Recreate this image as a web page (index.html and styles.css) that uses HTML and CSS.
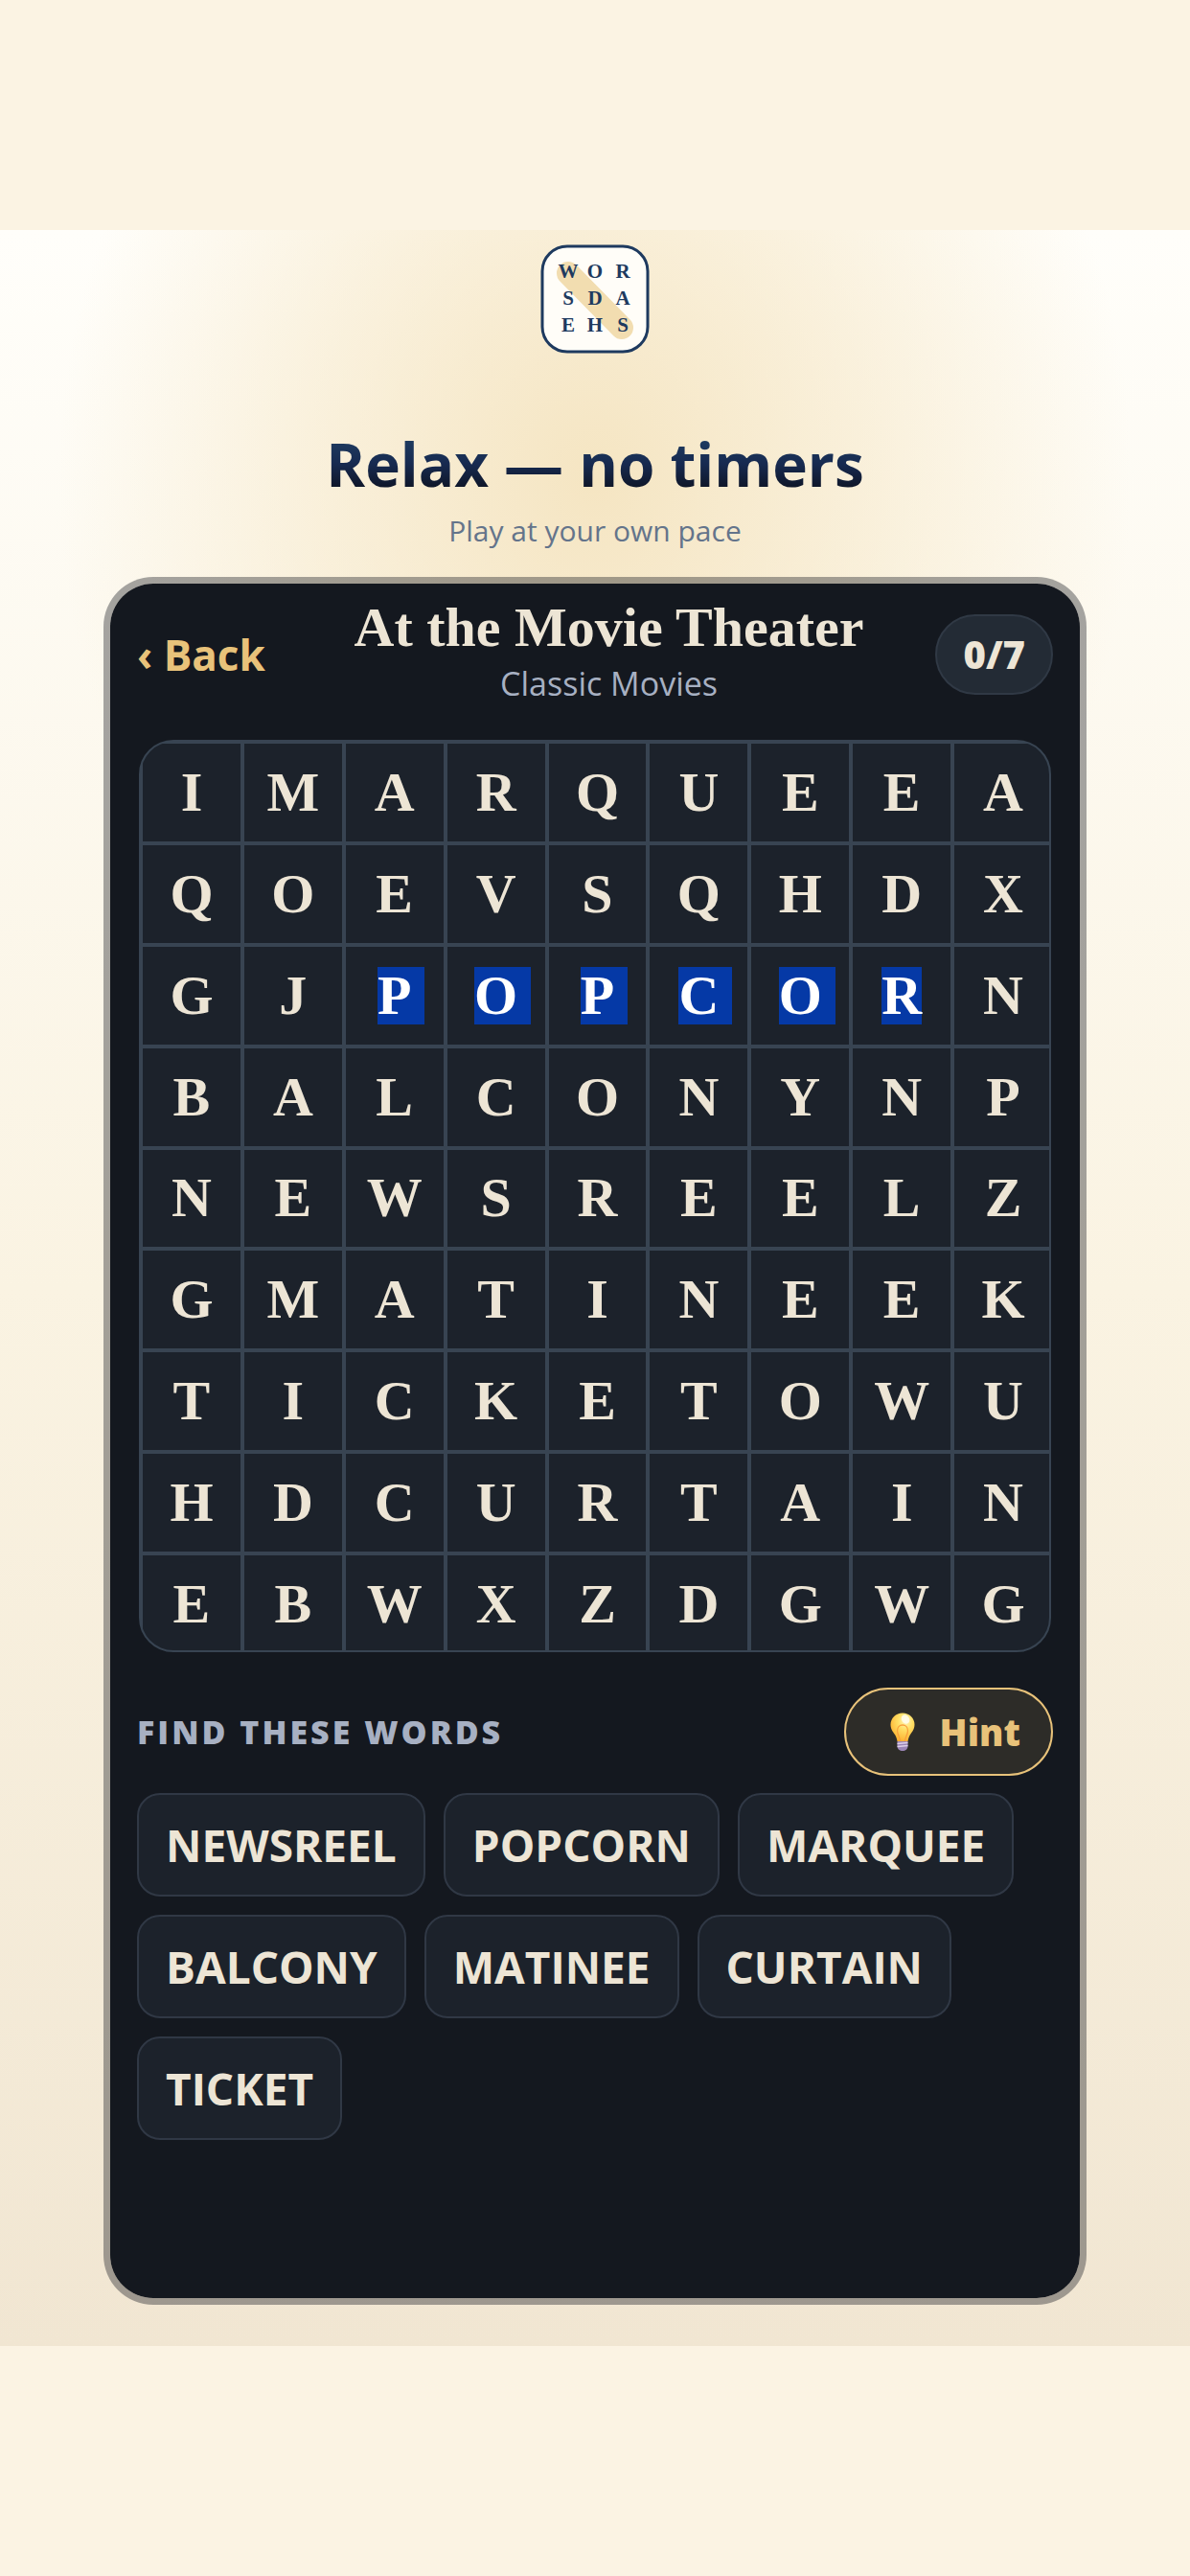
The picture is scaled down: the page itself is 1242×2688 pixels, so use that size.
FILE: index.html
```html
<!DOCTYPE html>
<html lang="en">
<head>
    <meta charset="UTF-8">
    <meta name="viewport" content="width=device-width, initial-scale=1.0">
    <title>Wordsearch | Relax</title>
    <link rel="stylesheet" href="styles.css">
</head>
<body>

    <main class="stage">
        <svg class="logo" viewBox="0 0 114 114" role="img" aria-label="Wordsearch logo">
            <rect x="2" y="2" width="110" height="110" rx="26" fill="#fffdf8" stroke="#1e3a5f" stroke-width="3"/>
            <line x1="29" y1="30" x2="85" y2="87" stroke="#f2ddb0" stroke-width="24" stroke-linecap="round"/>
            <g class="logo-letters">
                <text x="29" y="35">W</text><text x="57" y="35">O</text><text x="86" y="35">R</text>
                <text x="29" y="63">S</text><text x="57" y="63">D</text><text x="86" y="63">A</text>
                <text x="29" y="91">E</text><text x="57" y="91">H</text><text x="86" y="91">S</text>
            </g>
        </svg>

        <h1>Relax — no timers</h1>
        <p class="tagline">Play at your own pace</p>

        <section class="phone">
            <header class="game-header">
                <button class="back-btn" type="button">‹ Back</button>
                <div class="game-title">
                    <h2>At the Movie Theater</h2>
                    <p>Classic Movies</p>
                </div>
                <div class="score">0/7</div>
            </header>

            <div class="board">
                <div class="cells">
                    <div>I</div><div>M</div><div>A</div><div>R</div><div>Q</div><div>U</div><div>E</div><div>E</div><div>A</div>
                    <div>Q</div><div>O</div><div>E</div><div>V</div><div>S</div><div>Q</div><div>H</div><div>D</div><div>X</div>
                    <div>G</div><div>J</div><div><span class="picked">P</span></div><div><span class="picked">O</span></div><div><span class="picked">P</span></div><div><span class="picked">C</span></div><div><span class="picked">O</span></div><div><span class="picked last">R</span></div><div>N</div>
                    <div>B</div><div>A</div><div>L</div><div>C</div><div>O</div><div>N</div><div>Y</div><div>N</div><div>P</div>
                    <div>N</div><div>E</div><div>W</div><div>S</div><div>R</div><div>E</div><div>E</div><div>L</div><div>Z</div>
                    <div>G</div><div>M</div><div>A</div><div>T</div><div>I</div><div>N</div><div>E</div><div>E</div><div>K</div>
                    <div>T</div><div>I</div><div>C</div><div>K</div><div>E</div><div>T</div><div>O</div><div>W</div><div>U</div>
                    <div>H</div><div>D</div><div>C</div><div>U</div><div>R</div><div>T</div><div>A</div><div>I</div><div>N</div>
                    <div>E</div><div>B</div><div>W</div><div>X</div><div>Z</div><div>D</div><div>G</div><div>W</div><div>G</div>
                </div>
            </div>

            <div class="words-header">
                <h3>FIND THESE WORDS</h3>
                <button class="hint-btn" type="button">
                    <svg class="bulb" viewBox="0 0 26 40" aria-hidden="true">
                        <defs>
                            <radialGradient id="glass" cx="62%" cy="28%" r="75%">
                                <stop offset="0" stop-color="#fff6c0"/>
                                <stop offset="0.4" stop-color="#ffe066"/>
                                <stop offset="1" stop-color="#fdb02f"/>
                            </radialGradient>
                        </defs>
                        <path d="M13 0.500C6 0.500 0.500 6 0.500 12.500c0 5 2.500 7.500 4.500 10.500 1.500 2.500 2 4.500 2.500 7h11c0.500-2.500 1-4.500 2.500-7 2-3 4.500-5.500 4.500-10.500C25.500 6 20 0.500 13 0.500z" fill="url(#glass)"/>
                        <path d="M10.500 30c0-4-3-7-3-11 0-3.500 2.300-6 5.500-6s5.500 2.500 5.500 6c0 4-3 7-3 11" fill="none" stroke="#f9a03c" stroke-width="1.300"/>
                        <ellipse cx="16" cy="7" rx="4" ry="5" fill="#fffdf0" opacity="0.850" transform="rotate(-35 16 7)"/>
                        <path d="M7.500 30h11v5c0 3-2.500 5-5.500 5s-5.500-2-5.500-5z" fill="#9a85b5"/>
                        <path d="M7.500 32.500l11-1M7.500 35.500l11-1" stroke="#ddd0e8" stroke-width="1.300"/>
                    </svg>
                    Hint
                </button>
            </div>

            <ul class="words">
                <li>NEWSREEL</li>
                <li>POPCORN</li>
                <li>MARQUEE</li>
                <li>BALCONY</li>
                <li>MATINEE</li>
                <li>CURTAIN</li>
                <li>TICKET</li>
            </ul>
        </section>
    </main>

</body>
</html>
```
FILE: styles.css
```css
* {
    margin: 0;
    padding: 0;
    box-sizing: border-box;
}

body {
    background: #fbf3e3;
    color: #ede5d5;
    font-family: "Open Sans", "Noto Sans", sans-serif;
    min-height: 100vh;
    padding: 240px 0;
}

.stage {
    display: flex;
    flex-direction: column;
    align-items: center;
    min-height: calc(100vh - 480px);
    padding: 15px 108px 43px;
    background:
        radial-gradient(ellipse 560px 660px at 50% 260px, #f5e5c2 0%, rgba(245, 229, 194, 0.5) 52%, rgba(245, 229, 194, 0) 100%),
        linear-gradient(#fffefa 0%, #faf3e2 50%, #f1e6d2 100%);
}

.logo {
    width: 114px;
    height: 114px;
}

.logo-letters {
    font-family: Georgia, "Liberation Serif", serif;
    font-size: 21px;
    font-weight: bold;
    fill: #1e3a5f;
    text-anchor: middle;
}

h1 {
    margin-top: 75px;
    font-size: 62px;
    line-height: 80px;
    font-weight: 700;
    color: transparent;
    background: linear-gradient(#1e3a5f 20%, #172a50 50%, #0f172a 80%);
    background-clip: text;
    -webkit-background-clip: text;
}

.tagline {
    margin-top: 8px;
    font-size: 30px;
    line-height: 44px;
    color: #64748b;
}

.phone {
    width: 100%;
    flex: 1;
    margin-top: 26px;
    padding: 16px 28px 60px;
    background: #14181f;
    background-clip: padding-box;
    border: 7px solid rgba(20, 24, 31, 0.38);
    border-radius: 52px;
}

.game-header {
    display: flex;
    align-items: center;
}

.back-btn {
    padding-right: 18px;
    border: none;
    background: none;
    color: #e8c27a;
    font: 700 44px "Open Sans", "Noto Sans", sans-serif;
    cursor: pointer;
}

.game-title {
    flex: 1;
    text-align: center;
}

.game-title h2 {
    font-family: Georgia, "Liberation Serif", serif;
    font-size: 58px;
    line-height: 60px;
}

.game-title p {
    font-size: 34px;
    line-height: 56px;
    font-weight: 500;
    color: #a7b0c2;
}

.score {
    padding: 12px 27px;
    border: 2px solid #303945;
    border-radius: 42px;
    background: #232b35;
    font-size: 40px;
    line-height: 56px;
    font-weight: 800;
}

.board {
    margin: 31px 2px 0;
    aspect-ratio: 1;
    border: 2px solid #384452;
    border-radius: 36px;
    background: #384452;
    overflow: hidden;
}

/* last row and column run slightly under the rounded frame */
.cells {
    display: grid;
    grid-template-columns: repeat(9, 1fr);
    grid-template-rows: repeat(9, 1fr);
    gap: 4px;
    width: calc(100% + 3px);
    height: calc(100% + 3px);
    padding: 2px 0 0 2px;
}

.cells div {
    display: flex;
    align-items: center;
    justify-content: center;
    background: #1c222b;
    font-family: Georgia, "Liberation Serif", serif;
    font-size: 58px;
    line-height: 60px;
    font-weight: bold;
}

.picked {
    margin-right: -14px;
    padding-right: 14px;
    background: #0539a6;
    color: #ffffff;
}

.picked.last {
    margin-right: 0;
    padding-right: 0;
}

.words-header {
    display: flex;
    align-items: center;
    justify-content: space-between;
    margin-top: 37px;
}

.words-header h3 {
    font-size: 34px;
    font-weight: 800;
    letter-spacing: 3px;
    color: #a7b0c2;
}

.hint-btn {
    display: flex;
    align-items: center;
    gap: 26px;
    padding: 16px 32px 16px 46px;
    border: 2px solid #e8c27a;
    border-radius: 46px;
    background: #2d2c28;
    color: #e8c27a;
    font: 800 38px/56px "Open Sans", "Noto Sans", sans-serif;
    cursor: pointer;
}

.bulb {
    width: 26px;
    height: 40px;
}

.words {
    display: flex;
    flex-wrap: wrap;
    gap: 19px;
    margin-top: 18px;
    list-style: none;
}

.words li {
    padding: 20px 28px;
    border: 2px solid #303845;
    border-radius: 24px;
    background: #1c222b;
    font-size: 46px;
    line-height: 64px;
    font-weight: 700;
}
```
